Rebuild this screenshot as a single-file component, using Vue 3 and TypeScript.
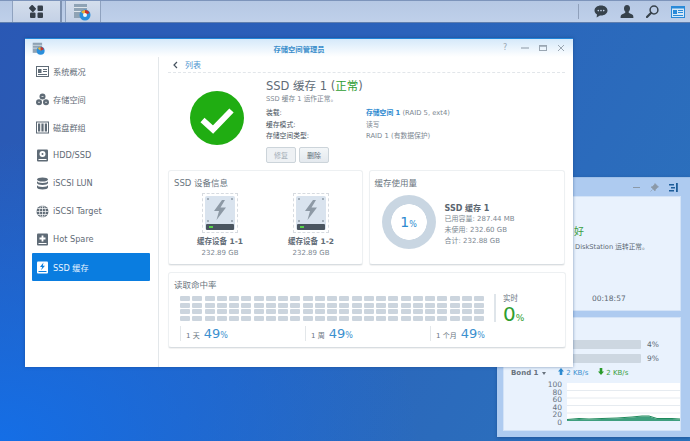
<script setup lang="ts">
const navItems = [
  { label: '系统概况', icon: 'overview' },
  { label: '存储空间', icon: 'volume' },
  { label: '磁盘群组', icon: 'group' },
  { label: 'HDD/SSD', icon: 'hdd' },
  { label: 'iSCSI LUN', icon: 'lun' },
  { label: 'iSCSI Target', icon: 'target' },
  { label: 'Hot Spare', icon: 'spare' },
  { label: 'SSD 缓存', icon: 'ssd', active: true },
]
const infoRows = [
  { k: '装载:', v: '(RAID 5, ext4)', link: '存储空间 1' },
  { k: '缓存模式:', v: '读写', link: '' },
  { k: '存储空间类型:', v: 'RAID 1 (有数据保护)', link: '' },
]
const devices = [
  { name: '缓存设备 1-1', size: '232.89 GB' },
  { name: '缓存设备 1-2', size: '232.89 GB' },
]
const blocks = Array.from({ length: 100 }, (_, i) => i)
const stats = [
  { label: '1 天', val: '49' },
  { label: '1 周', val: '49' },
  { label: '1 个月', val: '49' },
]
const gridLabels = ['100', '80', '60', '40', '20', '0']
</script>

<template>
  <div class="desktop">
    <header class="taskbar">
      <div class="tile tile-apps">
        <svg width="15" height="13" viewBox="0 0 15 13">
          <rect x="0.5" y="1" width="6" height="5" rx="1" fill="#37404a" transform="rotate(45 3.5 3.5)" />
          <rect x="8.5" y="0.5" width="5.5" height="5.5" rx="1" fill="#37404a" />
          <rect x="1" y="7.5" width="5.5" height="5.5" rx="1" fill="#37404a" />
          <rect x="8.5" y="7.5" width="5.5" height="5.5" rx="1" fill="#37404a" />
        </svg>
      </div>
      <div class="tile tile-app">
        <svg width="18" height="18" viewBox="0 0 18 18">
          <rect x="1" y="1" width="13" height="14" fill="#8fa3b5" />
          <rect x="1" y="4" width="13" height="1" fill="#dfe6ec" />
          <rect x="1" y="8" width="13" height="1" fill="#dfe6ec" />
          <circle cx="12" cy="12" r="5.5" fill="#2a8fdc" />
          <path d="M12 12 L8 9 A5 5 0 0 1 12 7 Z" fill="#e8b23a" />
          <path d="M12 12 L12 7 A5 5 0 0 1 16.5 10 Z" fill="#c9342c" />
          <circle cx="12" cy="12" r="2" fill="#f4f7fa" />
        </svg>
      </div>
      <div class="tray">
        <svg width="14" height="13" viewBox="0 0 14 13">
          <path d="M7 0.5C3.2 0.5 0.5 2.8 0.5 5.6c0 1.7 1 3.1 2.5 4L2.6 12.5 6 10.6h1c3.8 0 6.5-2.2 6.5-5S10.800.5 7 .5z" fill="#37424c" />
          <circle cx="4.300" cy="5.600" r=".8" fill="#c6d5ea" />
          <circle cx="7" cy="5.600" r=".8" fill="#c6d5ea" />
          <circle cx="9.700" cy="5.600" r=".8" fill="#c6d5ea" />
        </svg>
        <svg width="14" height="13" viewBox="0 0 14 13">
          <path d="M7 0C5 0 4 1.500 4 3.500 4 5 4.700 6.300 5.500 7 5.500 8.300 3 8.800 1.500 9.800 .7 10.300.6 11.500.6 13h12.800c0-1.500-.1-2.700-.9-3.200C11 8.800 8.500 8.300 8.500 7 9.300 6.300 10 5 10 3.500 10 1.500 9 0 7 0z" fill="#37424c" />
        </svg>
        <svg width="13" height="13" viewBox="0 0 13 13">
          <circle cx="8" cy="5" r="3.900" fill="none" stroke="#37424c" stroke-width="1.500" />
          <path d="M5.200 7.800 1 12" stroke="#37424c" stroke-width="2.200" stroke-linecap="round" />
        </svg>
        <svg width="14" height="12" viewBox="0 0 14 12">
          <rect x=".5" y=".5" width="13" height="11" fill="#d5e8f8" stroke="#2a8ad8" />
          <rect x=".5" y=".5" width="13" height="2" fill="#2a8ad8" />
          <rect x="2" y="4" width="4" height="4" fill="#2a8ad8" />
          <path d="M7 4.500h5M7 6.500h5M2 9.500h10" stroke="#2a8ad8" />
        </svg>
      </div>
    </header>

    <!-- widget window, behind the main window -->
    <aside class="widget">
      <div class="widget-head">
        <span class="w-min"></span>
        <svg width="9" height="9" viewBox="0 0 9 9"><path d="M5 0.500 8.500 4 7.500 4.500 5.500 6.500 5 8 1 4 2.500 3.500 4.500 1.500z M2.500 6.500 0.500 8.500" fill="#8b99a8" stroke="#8b99a8" stroke-width=".6" /></svg>
        <svg width="9" height="9" viewBox="0 0 9 9"><path d="M0 1h5v1.500H0zM2 4h4v1.500H2zM0 7h5v1.500H0z" fill="#1d5d99" /><rect x="7" y="0" width="1.800" height="9" fill="#1d5d99" /></svg>
      </div>
      <section class="w-card w-status">
        <div class="w-good">好</div>
        <div class="w-msg">DiskStation 运转正常。</div>
        <div class="w-time">00:18:57</div>
      </section>
      <section class="w-card w-res">
        <div class="w-row"><div class="w-bar"></div><span>4%</span></div>
        <div class="w-row"><div class="w-bar"></div><span>9%</span></div>
        <div class="w-net">
          <span class="w-bond">Bond 1 <i class="caret"></i></span>
          <span class="w-up">
            <svg width="6" height="7" viewBox="0 0 6 7"><path d="M3 0 6 3.500H4.300V7H1.700V3.500H0z" fill="#2d8ad0" /></svg>
            2 KB/s
          </span>
          <span class="w-down">
            <svg width="6" height="7" viewBox="0 0 6 7"><path d="M3 7 6 3.500H4.300V0H1.700V3.500H0z" fill="#2a9a2a" /></svg>
            2 KB/s
          </span>
        </div>
        <div class="w-chart">
          <div class="w-labels"><span v-for="l in gridLabels" :key="l">{{ l }}</span></div>
          <svg class="w-plot" width="113" height="38" viewBox="0 0 113 38">
            <rect width="113" height="38" fill="#fff" />
            <path d="M0 7.500h113M0 15h113M0 22.500h113M0 30h113" stroke="#e6ebf0" stroke-width="1" />
            <path d="M0 37 L12 36 L22 36.500 L35 36 L50 35.500 L65 34.500 L75 33.500 L82 33.500 L90 36 L105 36 L113 36.500 V38 H0 Z" fill="#3f9f7e" />
            <path d="M0 36.500 L12 35.500 L22 36 L35 35.500 L50 35 L65 34 L75 33 L82 33 L90 35.500 L105 35.500 L113 36" fill="none" stroke="#1f8a5c" />
          </svg>
        </div>
      </section>
    </aside>

    <main class="window">
      <div class="win-head">
        <svg class="win-logo" width="13" height="13" viewBox="0 0 18 18">
          <rect x="1" y="1" width="13" height="14" fill="#8fa3b5" />
          <rect x="1" y="4" width="13" height="1" fill="#dfe6ec" />
          <rect x="1" y="8" width="13" height="1" fill="#dfe6ec" />
          <circle cx="12" cy="12" r="5.500" fill="#2a8fdc" />
          <path d="M12 12 L8 9 A5 5 0 0 1 12 7 Z" fill="#e8b23a" />
          <path d="M12 12 L12 7 A5 5 0 0 1 16.500 10 Z" fill="#c9342c" />
        </svg>
        <div class="win-title">存储空间管理员</div>
        <div class="win-ctrl">
          <span class="q">?</span>
          <svg width="8" height="8" viewBox="0 0 8 8"><path d="M0 4h8" stroke="#9aa6b2" stroke-width="1.200" /></svg>
          <svg width="8" height="8" viewBox="0 0 8 8"><rect x=".5" y="1.500" width="7" height="5" fill="none" stroke="#9aa6b2" /><path d="M0 2h8" stroke="#9aa6b2" stroke-width="1.500" /></svg>
          <svg width="8" height="8" viewBox="0 0 8 8"><path d="M1 1l6 6M7 1l-6 6" stroke="#9aa6b2" /></svg>
        </div>
      </div>
      <div class="win-body">
        <nav class="sidebar">
          <div v-for="n in navItems" :key="n.label" class="nav-item" :class="{ active: n.active }">
            <svg class="nav-ico" width="13" height="13" viewBox="0 0 13 13">
              <template v-if="n.icon === 'overview'">
                <rect x=".5" y="1.500" width="12" height="10" fill="none" stroke="#5f6b76" />
                <rect x="2" y="4" width="3.500" height="4" fill="#5f6b76" />
                <path d="M7 4.500h4M7 6.500h4M2 9.500h9" stroke="#5f6b76" />
              </template>
              <template v-else-if="n.icon === 'volume'">
                <circle cx="6.500" cy="3.500" r="3" fill="#5f6b76" />
                <circle cx="3" cy="9.300" r="3" fill="#5f6b76" />
                <circle cx="10" cy="9.300" r="3" fill="#5f6b76" />
                <path d="M5.500 3.500h2M2 9.300h2M9 9.300h2" stroke="#fff" stroke-width=".7" />
              </template>
              <template v-else-if="n.icon === 'group'">
                <rect x=".5" y="1" width="12" height="11" fill="none" stroke="#5f6b76" />
                <rect x="2" y="2.500" width="2.200" height="8" fill="#5f6b76" />
                <rect x="5.400" y="2.500" width="2.200" height="8" fill="#5f6b76" />
                <rect x="8.800" y="2.500" width="2.200" height="8" fill="#5f6b76" />
              </template>
              <template v-else-if="n.icon === 'hdd'">
                <rect x="1" y="0.500" width="11" height="12" rx="1" fill="#5f6b76" />
                <circle cx="6.500" cy="5" r="3" fill="#fff" />
                <circle cx="6.500" cy="5" r="1" fill="#5f6b76" />
                <rect x="2.500" y="10" width="8" height="1" fill="#fff" />
              </template>
              <template v-else-if="n.icon === 'lun'">
                <ellipse cx="6.500" cy="2.500" rx="5.500" ry="2" fill="#5f6b76" />
                <path d="M1 4v2c0 1.100 2.500 2 5.500 2S12 7.100 12 6V4c0 1.100-2.500 2-5.500 2S1 5.100 1 4z" fill="#5f6b76" />
                <path d="M1 8v2.500c0 1.100 2.500 2 5.500 2s5.500-.9 5.500-2V8c0 1.100-2.500 2-5.500 2S1 9.100 1 8z" fill="#5f6b76" />
              </template>
              <template v-else-if="n.icon === 'target'">
                <circle cx="6.500" cy="6.500" r="6" fill="#5f6b76" />
                <path d="M.5 6.500h12M1.500 3.500h10M1.500 9.500h10M6.500.5v12" stroke="#fff" stroke-width=".7" />
                <ellipse cx="6.500" cy="6.500" rx="3" ry="6" fill="none" stroke="#fff" stroke-width=".7" />
              </template>
              <template v-else-if="n.icon === 'spare'">
                <rect x="1" y="0.500" width="11" height="12" rx="1" fill="#5f6b76" />
                <path d="M6.500 2.500v6M3.500 5.500h6" stroke="#fff" stroke-width="1.800" />
                <rect x="2.500" y="10" width="8" height="1" fill="#fff" />
              </template>
              <template v-else>
                <rect x="1" y="0.500" width="11" height="12" rx="1" fill="#fff" />
                <path d="M7.500 1.500 4 6h2.200L5 9.300 9 4.800H6.800z" fill="#0a7fe0" />
                <rect x="2.500" y="10" width="8" height="1" fill="#0a7fe0" />
              </template>
            </svg>
            <span>{{ n.label }}</span>
          </div>
        </nav>

        <div class="main">
          <div class="crumb">
            <svg width="5" height="8" viewBox="0 0 5 8"><path d="M4 1 1 4l3 3" fill="none" stroke="#45525e" stroke-width="1.200" /></svg>
            <span>列表</span>
          </div>

          <div class="summary">
            <div class="status-ico">
              <svg width="54" height="54" viewBox="0 0 54 54">
                <circle cx="27" cy="27" r="27" fill="#20ad12" />
                <path d="M12.500 29 23 38.500 41.500 19.500" fill="none" stroke="#fff" stroke-width="6" />
              </svg>
            </div>
            <div class="sum-text">
              <div class="title">SSD 缓存 1 (<em>正常</em>)</div>
              <div class="sub">SSD 缓存 1 运作正常。</div>
              <div class="info">
                <div v-for="r in infoRows" :key="r.k" class="info-row">
                  <span class="k">{{ r.k }}</span>
                  <span class="v"><a v-if="r.link">{{ r.link }}</a> {{ r.v }}</span>
                </div>
              </div>
              <div class="btns">
                <button class="btn disabled">修复</button>
                <button class="btn">删除</button>
              </div>
            </div>
          </div>

          <div class="cards-row">
            <section class="card dev-card">
              <h3>SSD 设备信息</h3>
              <div class="devs">
                <div v-for="d in devices" :key="d.name" class="dev">
                  <div class="disk">
                    <div class="disk-body">
                      <svg class="bolt" width="14" height="20" viewBox="0 0 14 20"><path d="M9 0 1 11h5l-2.500 9L13 7.500H7.500L12 0z" fill="#8d99a5" /></svg>
                      <div class="disk-foot"><i></i></div>
                    </div>
                  </div>
                  <div class="dev-name">{{ d.name }}</div>
                  <div class="dev-size">{{ d.size }}</div>
                </div>
              </div>
            </section>

            <section class="card use-card">
              <h3>缓存使用量</h3>
              <div class="use">
                <div class="donut"><span class="d-num">1</span><span class="d-pct">%</span></div>
                <div class="use-text">
                  <strong>SSD 缓存 1</strong>
                  <span>已用容量: 287.44 MB</span>
                  <span>未使用: 232.60 GB</span>
                  <span>合计: 232.88 GB</span>
                </div>
              </div>
            </section>
          </div>

          <section class="card hit-card">
            <div class="hit-left">
              <h3>读取命中率</h3>
              <div class="blocks"><i v-for="b in blocks" :key="b"></i></div>
              <div class="stats">
                <div v-for="s in stats" :key="s.label" class="stat">
                  <span class="s-label">{{ s.label }}</span>
                  <span class="s-val">{{ s.val }}</span><span class="s-pct">%</span>
                </div>
              </div>
            </div>
            <div class="live">
              <span class="l-label">实时</span>
              <div class="l-val">0<span>%</span></div>
            </div>
          </section>
        </div>
      </div>
    </main>
  </div>
</template>

<style>
html, body { margin: 0; padding: 0; }
</style>

<style scoped>
* { box-sizing: border-box; }
.desktop {
  position: relative; width: 690px; height: 441px; overflow: hidden;
  background:
    radial-gradient(ellipse 420px 300px at 0% 100%, rgba(18, 112, 235, .9), rgba(18, 112, 235, 0)),
    linear-gradient(120deg, #2a58b4 0%, #2a62bb 45%, #2c74bd 100%);
  font-family: "DejaVu Sans", "Noto Sans CJK SC", sans-serif;
  color: #5c6873;
}
.taskbar {
  height: 23px; display: flex; align-items: stretch; padding-left: 12px;
  background: linear-gradient(#b6c8e4, #bfd0ea);
  border-top: 1px solid #7d94bb; border-bottom: 1px solid #5f7eae;
}
.tile { display: flex; align-items: center; justify-content: center; background: linear-gradient(#d4deec, #c4d1e6); border-left: 1px solid #8fa2bf; border-right: 1px solid #8fa2bf; }
.tile-apps { width: 50px; border-right: 2px solid #7f93b2; }
.tile-app { width: 36px; margin-left: 3px; padding-right: 2px; }
.tray { margin-left: auto; display: flex; align-items: center; gap: 12px; padding-left: 12px; margin-right: 2px; width: 106px; position: relative; }
.tray::before { content: ""; position: absolute; left: -4px; top: 3px; bottom: 3px; width: 1px; background: #8fa0bb; }

.window {
  position: absolute; left: 25px; top: 38px; width: 548px; height: 329px;
  background: #fff; border-top: 1px solid #1f84d8; box-shadow: 0 0 3px rgba(20, 60, 120, .5);
  display: flex; flex-direction: column;
}
.win-head {
  height: 18px; flex: none; display: flex; align-items: center; position: relative;
  background: linear-gradient(#d5e9fa, #fff);
  padding: 0 8px 0 7px;
}
.win-logo { margin-top: 1px; }
.win-title {
  position: absolute; left: 0; right: 0; text-align: center;
  font-size: 7.300px; font-weight: 700; color: #3a8ecb; padding-top: 2px;
}
.win-ctrl { margin-left: auto; display: flex; align-items: center; gap: 10px; position: relative; }
.q { font-size: 8px; color: #9aa6b2; width: 8px; line-height: 8px; }

.win-body { flex: 1; display: flex; min-height: 0; }
.sidebar { width: 134px; flex: none; border-right: 1px solid #e3e7ea; padding: 0 8px 0 7px; }
.nav-item {
  height: 28px; display: flex; align-items: center; gap: 4px; padding-left: 4px;
  font-size: 8.200px; color: #5f6b76; border-radius: 1px;
}
.nav-item.active { background: #0a7de0; color: #e8f4ff; }
.nav-ico { flex: none; }

.main { flex: 1; padding: 0 8px 0 9px; min-width: 0; }
.crumb {
  height: 16px; display: flex; align-items: center; gap: 7px; padding-left: 5px;
  font-size: 8px; color: #4d95cf; border-bottom: 1px dashed #e2e6ea;
}
.summary { display: flex; height: 94px; }
.status-ico { width: 98px; padding: 18px 0 0 22px; flex: none; }
.sum-text { flex: 1; padding-top: 5px; }
.title { font-size: 11.500px; line-height: 17px; color: #5f6b76; }
.title em { font-style: normal; color: #2e9e32; }
.sub { font-size: 6.700px; line-height: 9px; color: #7c8791; }
.info { margin-top: 4px; }
.info-row { display: flex; font-size: 6.800px; line-height: 11.500px; color: #7c8791; }
.k { width: 100px; color: #47525c; flex: none; }
.v a { color: #2d8ad0; font-weight: 700; }
.btns { display: flex; gap: 3px; margin-top: 4px; }
.btn {
  width: 30px; height: 16px; padding: 0; font: inherit; font-size: 7px; color: #5f6b76;
  background: linear-gradient(#f3f6f8, #e4e9ee); border: 1px solid #ccd4da; border-radius: 2px;
}
.btn.disabled { color: #a4aeb7; background: #eef1f4; }

.cards-row { display: flex; gap: 6px; margin-top: 3px; }
.card { background: #fff; border: 1px solid #edf0f2; border-bottom-color: #d8dde1; border-radius: 3px; box-shadow: 0 1px 1px rgba(0, 0, 0, .06); }
h3 { margin: 0; font-size: 8.500px; font-weight: 400; color: #6a7580; line-height: 12px; }
.dev-card { width: 195px; height: 95px; padding: 6px 5px 0; }
.use-card { width: 197px; height: 95px; padding: 6px 5px 0; }
.devs { display: flex; padding-left: 21px; gap: 41px; margin-top: 4px; }
.dev { width: 50px; display: flex; flex-direction: column; align-items: center; }
.disk { width: 36px; height: 40px; border: 1px dashed #d7dbe0; padding: 2px; }
.disk-body {
  height: 100%; border-radius: 2px; position: relative; display: flex; flex-direction: column; align-items: center; padding-top: 4px;
  background:
    radial-gradient(circle 1px at 3px 3px, #8d99a5 60%, transparent 100%),
    radial-gradient(circle 1px at 27px 3px, #8d99a5 60%, transparent 100%),
    radial-gradient(circle 1px at 3px 25px, #8d99a5 60%, transparent 100%),
    radial-gradient(circle 1px at 27px 25px, #8d99a5 60%, transparent 100%),
    #d9e3ee;
}
.bolt { flex: none; }
.disk-foot { position: absolute; left: 1px; right: 1px; bottom: 0; height: 6px; background: #4a5560; border-radius: 1px; }
.disk-foot i { position: absolute; left: 3px; top: 2px; width: 4px; height: 2px; background: #57d24a; }
.dev-name { font-size: 7.500px; font-weight: 700; color: #5f6b76; margin-top: 3px; line-height: 12px; white-space: nowrap; }
.dev-size { font-size: 7px; color: #7c8791; line-height: 11px; white-space: nowrap; }
.use { display: flex; padding: 6px 0 0 7px; }
.donut {
  width: 54px; height: 54px; border-radius: 50%; flex: none; display: flex; align-items: baseline; justify-content: center;
  background: radial-gradient(circle, #fff 0 17.500px, #c9d6e2 18px);
  padding-top: 18px; color: #2d8ad0; line-height: 18px;
}
.d-num { font-size: 14px; }
.d-pct { font-size: 8px; }
.use-text { display: flex; flex-direction: column; margin-left: 9px; padding-top: 8px; font-size: 7px; line-height: 11px; color: #7c8791; }
.use-text strong { font-size: 8px; line-height: 11px; color: #5a656f; }

.hit-card { height: 76px; width: 398px; margin-top: 7px; display: flex; padding: 6px 0 0 5px; }
.hit-left { width: 317px; flex: none; }
.blocks { display: grid; grid-template-columns: repeat(25, 10px); column-gap: 2.250px; row-gap: 1.700px; margin: 5px 0 0 6px; }
.blocks i { height: 5px; background: #ccd5de; border-radius: 1px; }
.stats { display: flex; margin: 5px 0 0 6px; }
.stat { width: 125px; height: 15px; border-left: 1px solid #e3e7ea; padding-left: 5px; display: flex; align-items: baseline; flex: none; color: #6a7580; white-space: nowrap; }
.s-label { font-size: 7px; margin-right: 4px; }
.s-val { font-size: 13px; line-height: 15px; color: #3c90cf; }
.s-pct { font-size: 8px; color: #3c90cf; }
.live { height: 28px; margin-top: 15px; margin-left: 3px; border-left: 2px solid #dfe5ea; padding-left: 7px; display: flex; flex-direction: column; }
.l-label { font-size: 7.500px; line-height: 10px; color: #6a7580; }
.l-val { font-size: 20px; line-height: 20px; color: #2f9e2f; white-space: nowrap; }
.l-val span { font-size: 9px; }

.widget {
  position: absolute; left: 497px; top: 177px; width: 193px; height: 260px;
  background: #aecbf0; border-top: 1px solid #9fc0e8; padding: 0 9px 0 6px;
  box-shadow: 0 1px 3px rgba(20, 60, 120, .5);
}
.widget-head { height: 18px; display: flex; align-items: center; justify-content: flex-end; gap: 10px; margin-right: 3px; }
.w-min { width: 7px; height: 1px; background: #8b99a8; }
.w-card { background: #e9f2fd; border: 1px solid #d3e3f7; }
.w-status { height: 115px; padding: 28px 0 0 70px; }
.w-good { font-size: 10px; line-height: 14px; color: #3aa042; white-space: nowrap; }
.w-msg { font-size: 6.700px; line-height: 10px; margin-top: 3px; white-space: nowrap; padding-left: 1px; }
.w-time { font-size: 7.500px; line-height: 10px; margin-top: 42px; padding-left: 18px; }
.w-res { height: 114px; margin-top: 6px; padding: 22px 0 0 62px; position: relative; }
.w-row { display: flex; align-items: center; height: 9px; margin-bottom: 5px; margin-left: -20px; font-size: 7.500px; }
.w-bar { width: 95px; height: 9px; background: #cdd7e1; border-radius: 1px; margin-right: 6px; }
.w-net { display: flex; margin: 3px 0 0 -55px; font-size: 7px; line-height: 10px; height: 12px; white-space: nowrap; }
.w-bond { width: 47px; font-weight: 700; color: #68737d; }
.caret { display: inline-block; border: 2px solid transparent; border-top: 3px solid #68737d; border-bottom: 0; vertical-align: middle; margin-left: 1px; }
.w-up { color: #3c90cf; width: 40px; }
.w-down { color: #3aa042; }
.w-chart { display: flex; margin: 3px 0 0 -17px; }
.w-labels { width: 13px; display: flex; flex-direction: column; justify-content: space-between; align-items: flex-end; font-size: 7.500px; line-height: 7.600px; height: 43px; color: #68737d; margin-top: -2px; }
.w-plot { margin-left: 5px; display: block; }
</style>
